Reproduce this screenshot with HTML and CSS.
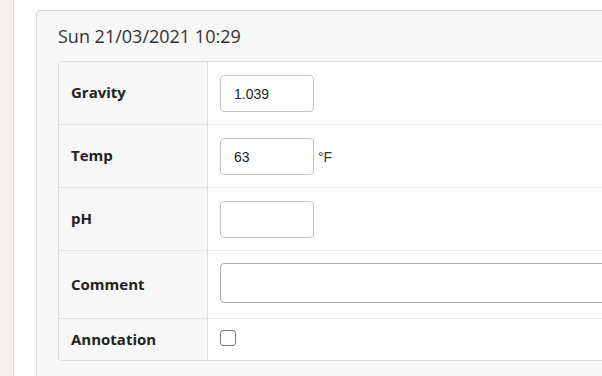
FILE: index.html
```html
<!DOCTYPE html>
<html>
<head>
<meta charset="utf-8">
<link rel="stylesheet" href="styles.css">
</head>
<body>
<div class="sidebar"></div>
<div class="content">
  <div class="panel">
    <h3 class="title">Sun 21/03/2021 10:29</h3>
    <div class="table-wrap">
      <table class="grid">
        <tr class="row">
          <th class="label">Gravity</th>
          <td class="value"><div class="field"><input class="input" type="text" value="1.039"></div></td>
        </tr>
        <tr class="row">
          <th class="label">Temp</th>
          <td class="value"><div class="field"><input class="input" type="text" value="63"><span class="unit">°F</span></div></td>
        </tr>
        <tr class="row">
          <th class="label">pH</th>
          <td class="value"><div class="field"><input class="input" type="text" value=""></div></td>
        </tr>
        <tr class="row row-comment">
          <th class="label">Comment</th>
          <td class="value"><textarea class="textarea"></textarea></td>
        </tr>
        <tr class="row row-check">
          <th class="label">Annotation</th>
          <td class="value"><input class="check" type="checkbox"></td>
        </tr>
      </table>
    </div>
  </div>
</div>
</body>
</html>
```
FILE: styles.css
```css
html, body {
  margin: 0;
  padding: 0;
  background: #ffffff;
}
body {
  display: flex;
  width: 602px;
  height: 376px;
  overflow: hidden;
  font-family: "Open Sans", "Liberation Sans", sans-serif;
  color: #333;
}
.sidebar {
  width: 13px;
  flex-shrink: 0;
  background: #f3f0ec;
  border-right: 1px solid #dcdad6;
}
.content {
  padding: 10px 0 0 22px;
  flex-shrink: 0;
}
.panel {
  width: 700px;
  height: 420px;
  background: #f7f7f7;
  border: 1px solid #d6d6d6;
  border-radius: 4px;
  padding: 0 0 0 21px;
  box-sizing: border-box;
}
.title {
  margin: 0;
  padding: 13px 0 13px;
  font-size: 18px;
  line-height: 24px;
  font-weight: 400;
  color: #333;
}
.table-wrap {
  width: 640px;
  border: 1px solid #dddddd;
  border-radius: 4px;
  overflow: hidden;
  background: #fff;
}
.grid {
  border-collapse: separate;
  border-spacing: 0;
  width: 100%;
}
.label {
  width: 124px;
  padding: 0 12px 2px;
  text-align: left;
  vertical-align: middle;
  background: #f7f7f7;
  border-right: 1px solid #dddddd;
  font-size: 15px;
  font-weight: 700;
  color: #222;
}
.value {
  padding: 13px 12px 12px;
  vertical-align: top;
}
.row + .row .label {
  border-top: 1px solid #e3e3e3;
}
.row + .row .value {
  border-top: 1px solid #ececec;
}
.field {
  display: flex;
  align-items: center;
}
.input {
  display: block;
  box-sizing: border-box;
  width: 94px;
  height: 37px;
  margin: 0;
  padding: 0 12px 0 13px;
  border: 1px solid #c4c4c4;
  border-radius: 4px;
  font-family: "Liberation Sans", Arial, sans-serif;
  font-size: 14px;
  color: #222;
  background: #fff;
  outline: none;
}
.unit {
  margin-left: 4px;
  font-family: "Liberation Sans", Arial, sans-serif;
  font-size: 14px;
  color: #333;
}
.row-comment .value {
  padding: 12px 12px 15px;
}
.textarea {
  display: block;
  box-sizing: border-box;
  width: 420px;
  height: 40px;
  margin: 0;
  padding: 6px 12px;
  border: 1px solid #ababab;
  border-radius: 4px;
  resize: none;
  font-family: "Liberation Sans", Arial, sans-serif;
  font-size: 14px;
  background: #fff;
  outline: none;
}
.row-check .value {
  padding: 11px 12px 14px;
}
.check {
  display: block;
  appearance: none;
  -webkit-appearance: none;
  box-sizing: border-box;
  width: 16px;
  height: 16px;
  margin: 0;
  border: 1px solid #767676;
  border-radius: 3px;
  background: #fff;
}
```
